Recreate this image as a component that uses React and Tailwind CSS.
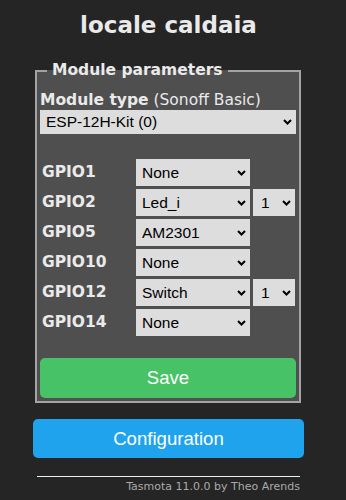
import React from 'react'

const Chevron = () => (
  <svg className="pointer-events-none absolute right-[4px] top-1/2 -translate-y-1/2" width="9" height="6" viewBox="0 0 9 6" fill="none">
    <path d="M1 1 L4.5 4.5 L8 1" stroke="#000" strokeWidth="2" />
  </svg>
)

const Select = ({ value, className, pad = 'pl-[6px]' }) => (
  <div className={`relative ${className}`}>
    <select
      defaultValue={value}
      className={`appearance-none w-full h-full bg-[#dddddd] text-black text-[15.5px] ${pad} outline-none`}
      style={{ fontFamily: '"Liberation Sans", Arial, sans-serif' }}
    >
      <option>{value}</option>
    </select>
    <Chevron />
  </div>
)

const rows = [
  { pin: 'GPIO1', value: 'None' },
  { pin: 'GPIO2', value: 'Led_i', idx: '1' },
  { pin: 'GPIO5', value: 'AM2301' },
  { pin: 'GPIO10', value: 'None' },
  { pin: 'GPIO12', value: 'Switch', idx: '1' },
  { pin: 'GPIO14', value: 'None' },
]

export default function App() {
  const verdana = { fontFamily: '"DejaVu Sans", Verdana, sans-serif' }
  const arial = { fontFamily: '"Liberation Sans", Arial, sans-serif' }
  return (
    <div className="min-h-[500px] bg-[#252525] text-[#eaeaea]" style={verdana}>
      <div className="ml-[33px] w-[271px] pt-[12px]">
        <h2 className="text-center text-[23px] leading-[27px] font-bold">locale caldaia</h2>

        <fieldset className="mt-[22px] ml-[2px] w-[266px] bg-[#4f4f4f] border-2 border-[#a3a3a3] px-[3px] pb-[3px]">
          <legend className="ml-[7px] px-[5px] text-[15.5px] leading-[19px] font-bold">Module parameters</legend>

          <div className="pt-[11px] text-[15.5px] leading-[19px]">
            <b>Module type</b> (Sonoff Basic)
          </div>
          <Select value="ESP-12H-Kit (0)" className="h-[24px] w-full" />

          <div className="mt-[25px] flex flex-col gap-[3px]">
            {rows.map((r) => (
              <div key={r.pin} className="flex items-center h-[27px]">
                <div className="w-[96px] pl-[2px] text-[15.5px] font-bold">{r.pin}</div>
                <Select value={r.value} className="h-[27px] w-[114px]" />
                {r.idx && <Select value={r.idx} pad="pl-[8px]" className="ml-[3px] h-[27px] w-[42px]" />}
              </div>
            ))}
          </div>

          <button
            className="mt-[22px] w-full h-[40px] rounded-[5px] bg-[#47c266] text-white text-[18.6px]"
            style={arial}
          >
            Save
          </button>
        </fieldset>

        <button
          className="mt-[16px] w-full h-[39px] rounded-[5px] bg-[#1fa3ec] text-white text-[18.6px]"
          style={arial}
        >
          Configuration
        </button>

        <div className="mx-[4px] mt-[18px] text-right">
          <hr className="border-[#eeeeee]" />
          <div className="mt-[3px] text-[11px] leading-[13px] text-[#aaaaaa]">Tasmota 11.0.0 by Theo Arends</div>
        </div>
      </div>
    </div>
  )
}
